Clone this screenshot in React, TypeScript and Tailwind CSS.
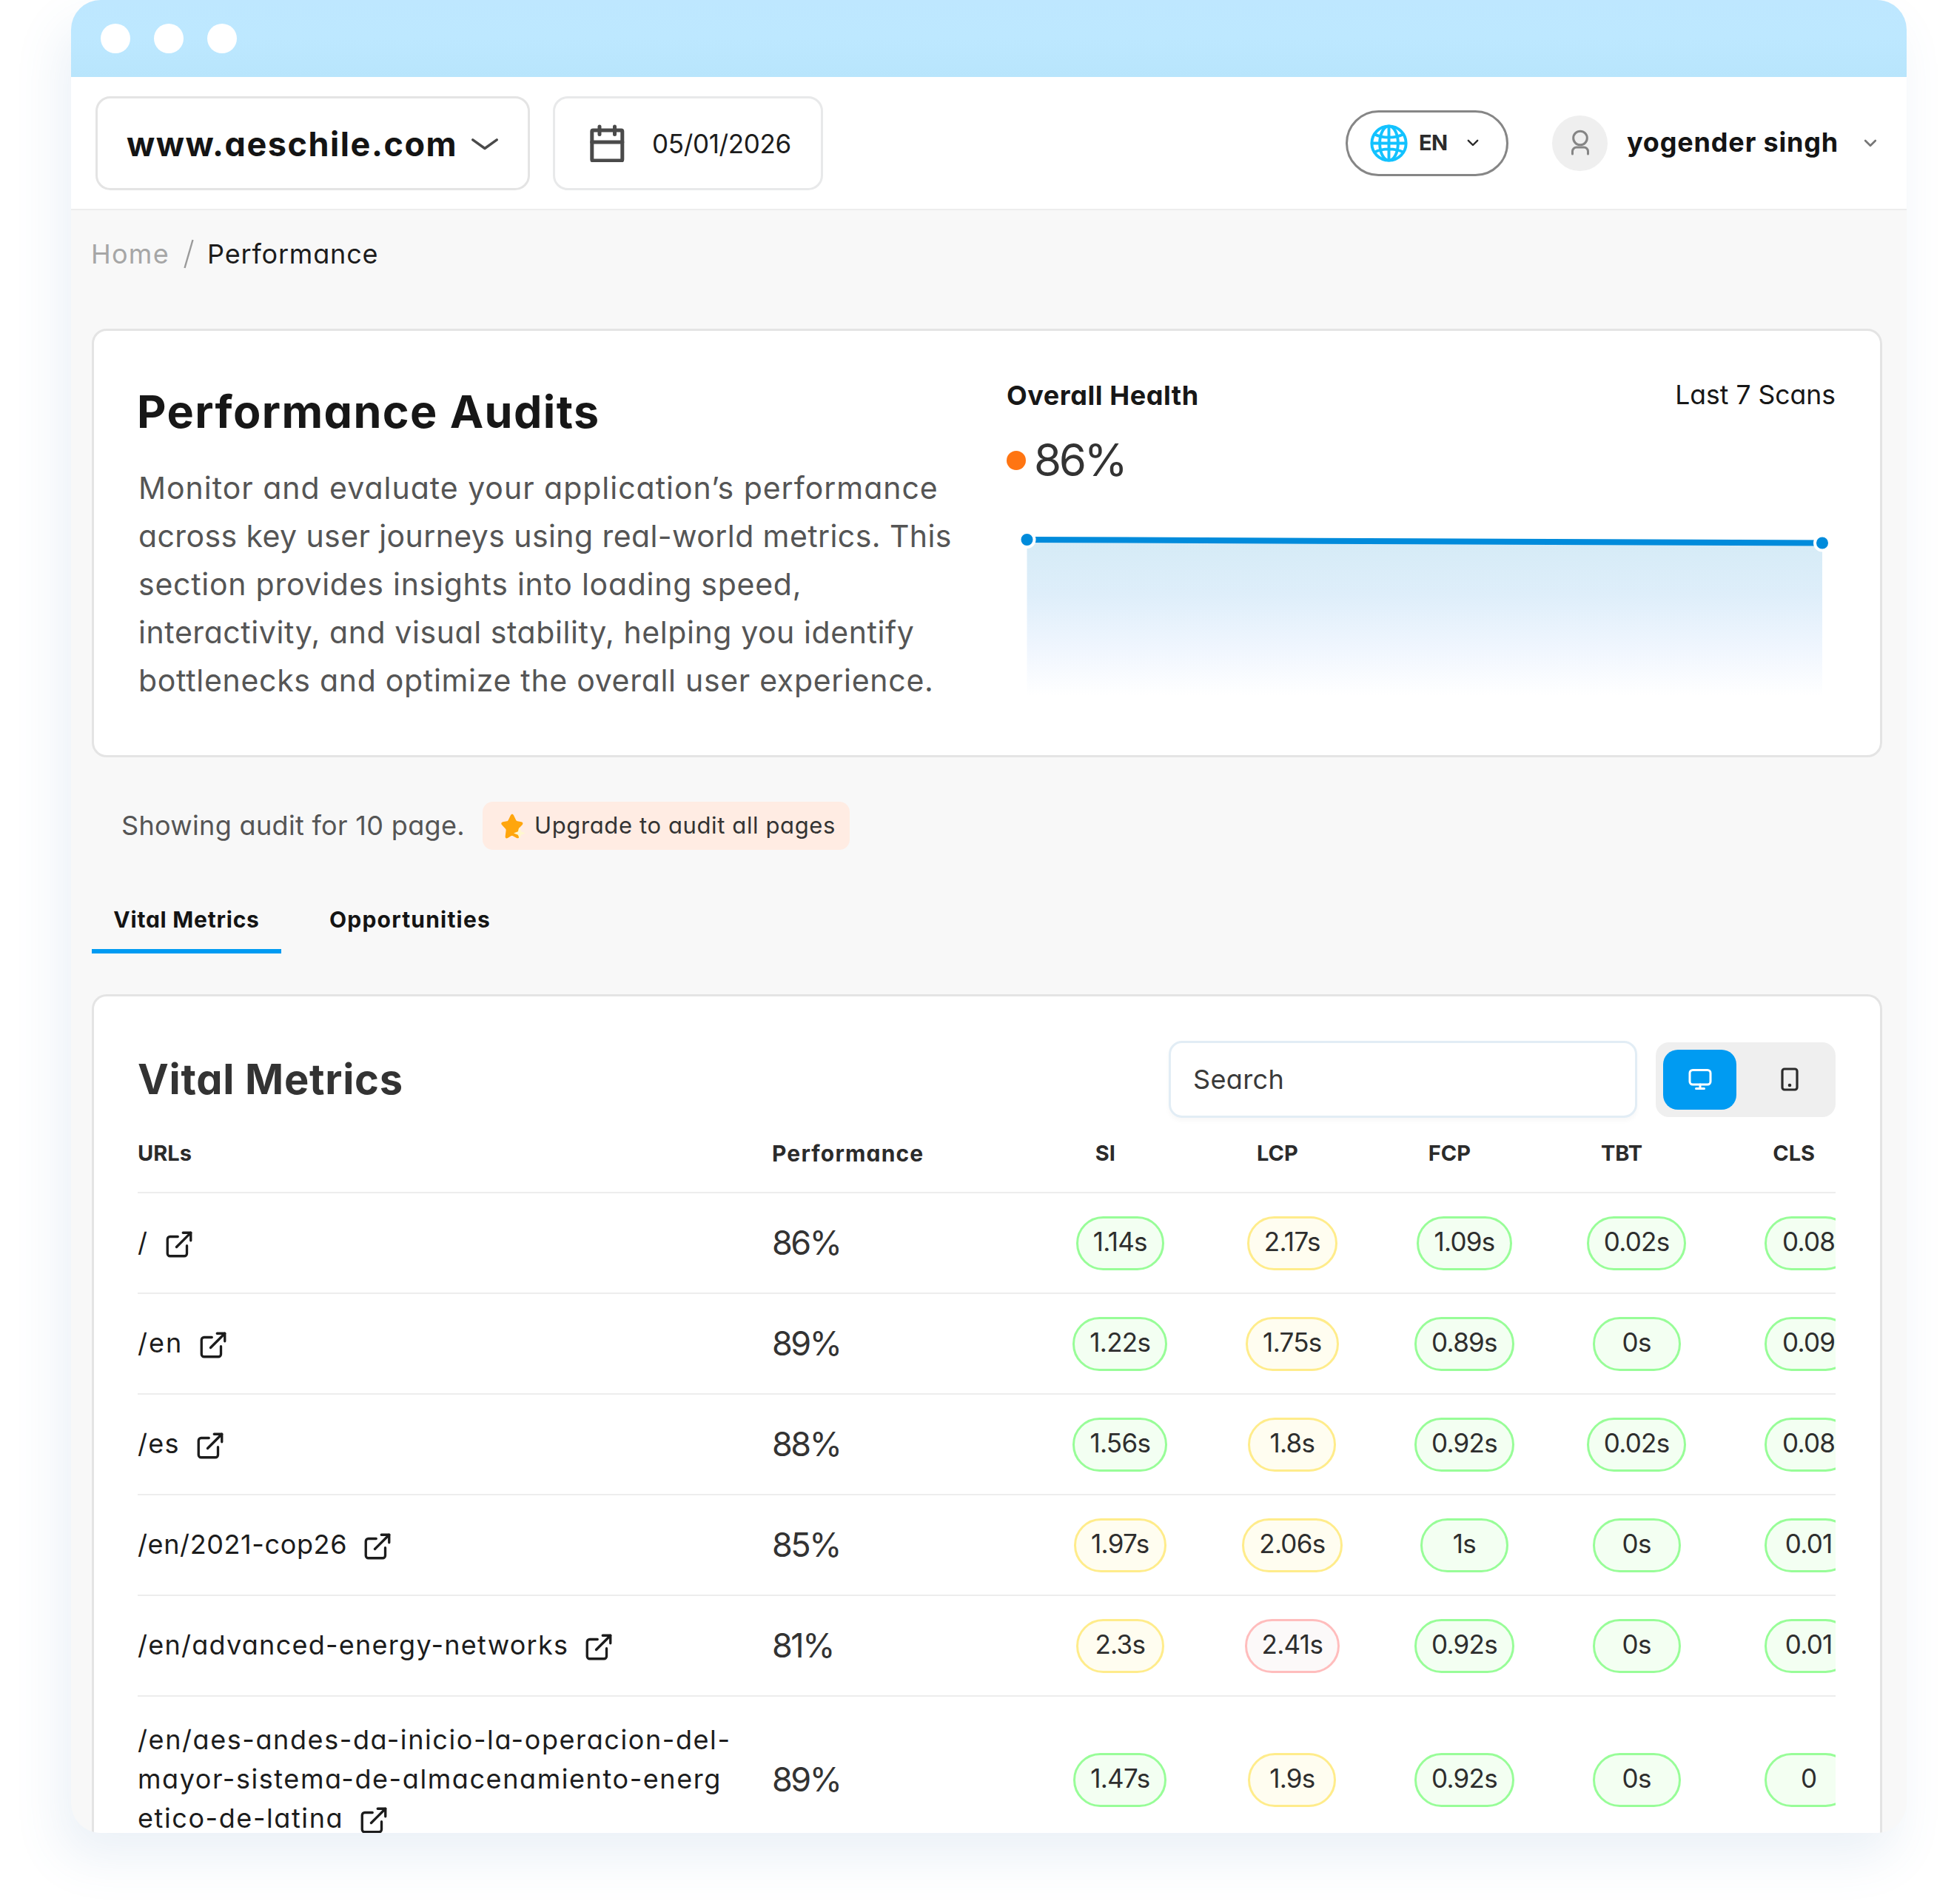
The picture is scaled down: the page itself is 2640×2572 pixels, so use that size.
import React from 'react';
import { ExternalLink } from 'lucide-react';
import clsx from 'clsx';

type Tone = 'good' | 'warn' | 'bad';

interface Metric {
  value: string;
  tone: Tone;
}

interface AuditRow {
  lines: string[];
  tracking: string;
  score: string;
  metrics: Metric[];
}

const good = (value: string): Metric => ({ value, tone: 'good' });
const warn = (value: string): Metric => ({ value, tone: 'warn' });
const bad = (value: string): Metric => ({ value, tone: 'bad' });

const rows: AuditRow[] = [
  { lines: ['/'], tracking: 'tracking-[0.06em]', score: '86%', metrics: [good('1.14s'), warn('2.17s'), good('1.09s'), good('0.02s'), good('0.08')] },
  { lines: ['/en'], tracking: 'tracking-[0.055em]', score: '89%', metrics: [good('1.22s'), warn('1.75s'), good('0.89s'), good('0s'), good('0.09')] },
  { lines: ['/es'], tracking: 'tracking-[0.035em]', score: '88%', metrics: [good('1.56s'), warn('1.8s'), good('0.92s'), good('0.02s'), good('0.08')] },
  { lines: ['/en/2021-cop26'], tracking: 'tracking-[0.017em]', score: '85%', metrics: [warn('1.97s'), warn('2.06s'), good('1s'), good('0s'), good('0.01')] },
  { lines: ['/en/advanced-energy-networks'], tracking: 'tracking-[0.035em]', score: '81%', metrics: [warn('2.3s'), bad('2.41s'), good('0.92s'), good('0s'), good('0.01')] },
  {
    lines: ['/en/aes-andes-da-inicio-la-operacion-del-', 'mayor-sistema-de-almacenamiento-energ', 'etico-de-latina'],
    tracking: 'tracking-[0.044em]',
    score: '89%',
    metrics: [good('1.47s'), warn('1.9s'), good('0.92s'), good('0s'), good('0')],
  },
];

const tones: Record<Tone, string> = {
  good: 'bg-[#f3fff2] border-[#98fd98]',
  warn: 'bg-[#fffdf0] border-[#ffec8b]',
  bad: 'bg-[#fcf9f9] border-[#ffbdbd]',
};

const gridCols = 'grid grid-cols-[857px_354px_repeat(5,232.6px)] items-center';

const Chevron = ({ className }: { className: string }) => (
  <svg viewBox="0 0 16 10" fill="none" stroke="currentColor" strokeWidth="2.4" strokeLinecap="round" strokeLinejoin="round" className={className}>
    <path d="M1.8 1.8 8 8l6.2-6.2" />
  </svg>
);

const Header = () => (
  <header className="h-[180px] bg-white border-b-2 border-[#ededed] flex items-center pl-[33px] pr-10">
    <button className="w-[587px] h-[127px] rounded-[20px] border-[3px] border-[#e4e4e4] flex items-center pl-[39px] pt-1 text-[#141414]">
      <span className="w-[466px] text-left text-[45px] font-bold tracking-[0.034em]">www.aeschile.com</span>
      <svg viewBox="0 0 36 16" fill="none" stroke="#4a4a4a" strokeWidth="3.4" strokeLinecap="round" strokeLinejoin="round" className="w-9 h-4">
        <path d="M1.8 1.8 18 13.5 34.2 1.8" />
      </svg>
    </button>
    <div className="ml-[31px] w-[365px] h-[127px] rounded-[20px] border-[3px] border-[#e8e9ea] flex items-center pl-[46px]">
      <svg viewBox="0 0 48 52" fill="none" stroke="#4a4a4a" strokeWidth="5" strokeLinecap="round" strokeLinejoin="round" className="w-12 h-[52px]">
        <rect x="3.8" y="9" width="41" height="41" rx="1.5" />
        <path d="M14 4v10.5M34.5 4v10.5M3.8 25h41" />
      </svg>
      <span className="ml-[37px] mt-0.5 text-[35px] tracking-[-0.01em] text-[#1c1c1c]">05/01/2026</span>
    </div>

    <div className="ml-auto flex items-center">
      <button className="w-[220px] h-[89px] rounded-full border-[3px] border-[#868686] flex items-center pl-[30px] text-[#2b2b2b]">
        <svg viewBox="0 0 52 52" fill="none" stroke="#12c2ff" strokeWidth="4" className="w-[51px] h-[51px]">
          <circle cx="26" cy="26" r="23.6" />
          <ellipse cx="26" cy="26" rx="12.6" ry="23.6" />
          <path d="M26 2v48M2 26h48M6 13.5c11.5 6 28.5 6 40 0M6 38.5c11.5-6 28.5-6 40 0" />
        </svg>
        <span className="ml-[15px] w-[65px] text-left text-[29px] font-bold tracking-[-0.02em]">EN</span>
        <Chevron className="w-4 h-2.5" />
      </button>
      <div className="ml-[59px] w-[75px] h-[75px] rounded-full bg-[#efefef] flex items-center justify-center">
        <svg viewBox="0 0 26 36" fill="none" stroke="#858585" strokeWidth="3" strokeLinecap="round" className="w-[26px] h-9">
          <circle cx="13" cy="11.5" r="9.3" />
          <path d="M2.5 33v-3.5a5.5 5.5 0 0 1 5.5-5.5h10a5.5 5.5 0 0 1 5.5 5.5V33" />
        </svg>
      </div>
      <span className="ml-[26px] -mt-0.5 w-[320px] whitespace-nowrap text-[36px] font-bold tracking-[0.023em] text-[#141414]">yogender singh</span>
      <Chevron className="w-[18px] h-[11px] text-[#777]" />
    </div>
  </header>
);

const HealthChart = () => (
  <svg viewBox="0 0 1120 240" className="mt-[42px] w-[1120px] h-60">
    <defs>
      <linearGradient id="health" x1="0" y1="0" x2="0" y2="1">
        <stop offset="0" stopColor="#d5ebf6" />
        <stop offset="0.35" stopColor="#deeefa" />
        <stop offset="0.7" stopColor="#f0f6fe" />
        <stop offset="1" stopColor="#ffffff" />
      </linearGradient>
    </defs>
    <path d="M27.5 29C500 29 620 33.5 1102 33.5V240H27.5Z" fill="url(#health)" />
    <path d="M27.5 29C500 29 620 33.5 1102 33.5" fill="none" stroke="#008bdb" strokeWidth="8" />
    <circle cx="27.5" cy="29" r="10" fill="#008bdb" stroke="#fff" strokeWidth="4" />
    <circle cx="1102" cy="33.5" r="10" fill="#008bdb" stroke="#fff" strokeWidth="4" />
  </svg>
);

const Overview = () => (
  <section className="h-[579px] rounded-[20px] border-[3px] border-[#e4e4e4] bg-white flex px-[60px]">
    <div className="w-[1173px] pt-[73px]">
      <h1 className="-ml-0.5 h-[72px] leading-[72px] text-[61px] font-bold tracking-[0.023em] text-[#171717]">Performance Audits</h1>
      <p className="mt-[35px] text-[41px] leading-[65px] text-[#555] whitespace-nowrap">
        <span className="block tracking-[0.024em]">Monitor and evaluate your application’s performance</span>
        <span className="block tracking-[0.010em]">across key user journeys using real-world metrics. This</span>
        <span className="block tracking-[0.018em]">section provides insights into loading speed,</span>
        <span className="block tracking-[0.014em]">interactivity, and visual stability, helping you identify</span>
        <span className="block tracking-[0.017em]">bottlenecks and optimize the overall user experience.</span>
      </p>
    </div>
    <div className="flex-1 pt-[65px]">
      <div className="flex justify-between items-center h-11 text-[#171717]">
        <span className="text-[36px] font-bold tracking-[0.016em]">Overall Health</span>
        <span className="text-[35.5px]">Last 7 Scans</span>
      </div>
      <div className="mt-[30px] h-[72px] flex items-center">
        <span className="w-[26px] h-[26px] rounded-full bg-[#ff7512]" />
        <span className="ml-[11px] -mt-0.5 text-[60px] tracking-[-0.055em] text-[#333]">86%</span>
      </div>
      <HealthChart />
    </div>
  </section>
);

const UpgradeNotice = () => (
  <div className="mt-[60px] h-[65px] flex items-center pl-10">
    <span className="-mt-px w-[488px] text-[36px] tracking-[0.009em] text-[#555]">Showing audit for 10 page.</span>
    <a className="w-[496px] h-[65px] rounded-[14px] bg-[#ffece3] flex items-center pl-6">
      <svg viewBox="0 0 34 36" className="w-[34px] h-9">
        <path
          d="M13.8 3.5c1.2-2.2 3.2-2.2 4.3 0l3 6.3c.4.8 1 1.3 1.9 1.5l5.3.9c2.2.5 2.8 2.4 1.3 4l-4.3 4.6c-.7.8-.9 1.5-.7 2.5l.9 8.2c.2 2.3-1.5 3.5-3.5 2.5l-5-2.7c-.8-.4-1.7-.4-2.5 0l-4.5 2.7c-2.2 1.1-3.7 0-3.3-2.4l.9-7.7c.2-1-.1-1.8-.7-2.5L2.3 16.5c-1.7-1.7-1-3.7 1.2-4.2l5.3-1c1-.2 1.6-.8 2-1.6z"
          fill="#ffa60d"
        />
        <path d="M26 19.5l2.2 5.8L34 27.5l-5.8 2.2L26 35l-2.2-5.3-5.8-2.2 5.8-2.2z" fill="#fff7d0" />
      </svg>
      <span className="ml-3 whitespace-nowrap text-[31px] tracking-[0.020em] text-[#333]">Upgrade to audit all pages</span>
    </a>
  </div>
);

const Tabs = () => (
  <nav className="mt-[54px] flex text-[30px] font-bold text-[#141414]">
    <button className="w-64 h-[86px] border-b-[6px] border-[#009bf2] tracking-[0.026em]">Vital Metrics</button>
    <button className="ml-[31px] w-[286px] h-[80px] tracking-[0.040em]">Opportunities</button>
  </nav>
);

const VitalMetrics = () => (
  <section className="mt-[55px] rounded-t-[20px] border-[3px] border-b-0 border-[#e4e4e4] bg-white pt-[60px] pl-[59px] pr-[60px]">
    <div className="flex items-center h-[104px]">
      <h2 className="flex-1 text-[56px] font-bold tracking-[0.013em] text-[#333]">Vital Metrics</h2>
      <div className="w-[633px] h-[104px] rounded-[18px] border-[3px] border-[#e2edf5] shadow-[0_4px_6px_rgba(0,0,0,0.03)] flex items-center pl-[30px] text-[36px] tracking-[0.01em] text-[#3a3a3a]">
        Search
      </div>
      <div className="ml-[25px] w-[243px] h-[101px] rounded-[18px] bg-[#efefef] flex items-center pl-2.5">
        <button className="w-[99px] h-[81px] rounded-[20px] bg-[#009bf2] flex items-center justify-center">
          <svg viewBox="0 0 32 30" fill="none" stroke="#fff" strokeWidth="3" strokeLinecap="round" strokeLinejoin="round" className="w-8 h-[30px]">
            <rect x="2" y="2.5" width="28" height="19.5" rx="4" />
            <path d="M16 22v5M10.5 27.5h11" />
          </svg>
        </button>
        <button className="ml-[60px] w-6 h-8">
          <svg viewBox="0 0 24 32" fill="none" stroke="#2b2b2b" strokeWidth="3.2" className="w-6 h-8">
            <rect x="2" y="2" width="20" height="28" rx="3" />
            <circle cx="12" cy="24" r="2.3" fill="#2b2b2b" stroke="none" />
          </svg>
        </button>
      </div>
    </div>

    <div className="overflow-hidden w-full">
      <div className={clsx(gridCols, 'h-[102px] border-b-2 border-[#ededed] text-[29px] font-bold text-[#2b2b2b]')}>
        <span className="-mt-1">URLs</span>
        <span className="-mt-1 text-[30px] tracking-[0.039em]">Performance</span>
        {['SI', 'LCP', 'FCP', 'TBT', 'CLS'].map((name) => (
          <span key={name} className="-mt-1 pr-10 text-center">{name}</span>
        ))}
      </div>

      {rows.map((row, i) => (
        <div key={i} className={clsx(gridCols, 'border-b-2 border-[#ededed]', row.lines.length > 1 ? 'h-[226px]' : 'h-[136px]')}>
          <div className={clsx('-mt-0.5 text-[36px] leading-[53px] text-[#1c1c1c] whitespace-nowrap', row.tracking)}>
            {row.lines.map((line, n) => (
              <div key={line} className="flex items-center h-[53px]">
                {line}
                {n === row.lines.length - 1 && <ExternalLink className="ml-5 mt-1.5 w-[42px] h-[42px]" strokeWidth={1.9} />}
              </div>
            ))}
          </div>
          <div className="text-[45px] tracking-[-0.055em] text-[#333]">{row.score}</div>
          {row.metrics.map((m, n) => (
            <div key={n} className="flex justify-center">
              <span className={clsx('min-w-[119px] h-[73px] px-[20px] pb-[3px] rounded-full border-[3px] flex items-center justify-center text-[35px] tracking-[-0.02em] text-[#2e2e2e]', tones[m.tone])}>
                {m.value}
              </span>
            </div>
          ))}
        </div>
      ))}
    </div>
  </section>
);

export default function App() {
  return (
    <div className="w-[2640px] h-[2572px] overflow-hidden bg-white pl-24 font-['Inter',sans-serif] [font-feature-settings:'cv11']">
      <div className="w-[2480px] h-[2476px] overflow-hidden rounded-[40px] bg-[#f8f8f8] shadow-[-14px_34px_66px_rgba(70,130,180,0.11)]">
        <div className="h-[104px] bg-gradient-to-b from-[#bee7ff] via-[#bde8ff] to-[#b8e5fc] flex items-center gap-8 pl-10">
          <span className="w-10 h-10 rounded-full bg-white" />
          <span className="w-10 h-10 rounded-full bg-white" />
          <span className="w-10 h-10 rounded-full bg-white" />
        </div>
        <Header />
        <main className="pl-7 pr-[33px]">
          <div className="h-[117px] mb-[43px] flex items-center text-[36px]">
            <span className="w-[125px] -ml-px tracking-[0.035em] text-[#a6a6a6]">Home</span>
            <svg viewBox="0 0 14 40" fill="none" stroke="#9a9a9a" strokeWidth="2.4" className="w-3.5 h-10">
              <path d="M12.5 1 1.5 39" />
            </svg>
            <span className="ml-[18px] tracking-[0.023em] text-[#1c1c1c]">Performance</span>
          </div>
          <Overview />
          <UpgradeNotice />
          <Tabs />
          <VitalMetrics />
        </main>
      </div>
    </div>
  );
}
